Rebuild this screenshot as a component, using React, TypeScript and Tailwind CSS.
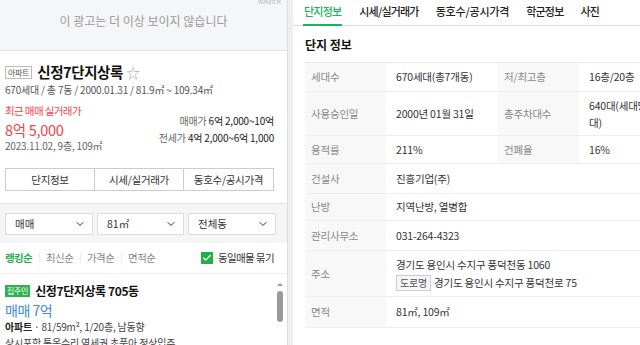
import { ChevronDown, Check } from 'lucide-react';

const font = { fontFamily: '"Noto Sans CJK KR", "Noto Sans", sans-serif' };

const rows: { h: string; cells: [string, React.ReactNode][] }[] = [
  { h: 'h-[29px]', cells: [['세대수', '670세대(총7개동)'], ['저/최고층', '16층/20층']] },
  {
    h: 'h-[44px]',
    cells: [
      ['사용승인일', '2000년 01월 31일'],
      ['총주차대수', <span className="block leading-[17px]">640대(세대당 1.0<br />대)</span>],
    ],
  },
  { h: 'h-[28px]', cells: [['용적률', '211%'], ['건폐율', '16%']] },
  { h: 'h-[30px]', cells: [['건설사', '진흥기업(주)']] },
  { h: 'h-[27px]', cells: [['난방', '지역난방, 열병합']] },
  { h: 'h-[30px]', cells: [['관리사무소', '031-264-4323']] },
  {
    h: 'h-[46px]',
    cells: [
      [
        '주소',
        <div className="leading-[18px]">
          <div>경기도 용인시 수지구 풍덕천동 1060</div>
          <div className="flex items-center gap-[3px]">
            <span className="border border-[#ccc] bg-[#f7f7f7] px-[3px] text-[10px] leading-[14px] text-[#555]">도로명</span>
            경기도 용인시 수지구 풍덕천로 75
          </div>
        </div>,
      ],
    ],
  },
  { h: 'h-[31px]', cells: [['면적', '81㎡, 109㎡']] },
];

function Select({ label, w }: { label: string; w: string }) {
  return (
    <div className={`${w} h-[22px] bg-white border border-[#ddd] flex items-center justify-between pl-[9px] pr-[6px] text-[10.5px] text-[#333]`}>
      <span>{label}</span>
      <ChevronDown size={12} strokeWidth={2} className="text-[#333]" />
    </div>
  );
}

export default function App() {
  return (
    <div className="flex h-[345px] w-[640px] overflow-hidden bg-white text-[#222]" style={font}>
      {/* left panel */}
      <div className="w-[288px] shrink-0 flex flex-col border-r border-[#ddd]">
        <div className="relative h-[51px] shrink-0 bg-[#f5f6f8] border-b border-[#e4e4e4] flex justify-center pt-[12px]">
          <span className="text-[12px] text-[#999]">이 광고는 더 이상 보이지 않습니다</span>
          <span className="absolute right-[6px] -top-[4px] text-[7px] font-bold text-[#c8c8c8]">NAVER</span>
        </div>

        <div className="pl-[5px] pr-[13px] pt-[12px] pb-[12px] border-b border-[#e4e4e4]">
          <div className="flex items-center h-[18px]">
            <span className="border border-[#bbb] text-[8px] leading-[11px] px-[2px] text-[#555] tracking-[-0.3px]">아파트</span>
            <span className="ml-[5px] text-[14.5px] font-bold text-[#111] tracking-[-0.4px]">신정7단지상록</span>
            <span className="ml-[3px] text-[14px] text-[#aaa] leading-none">☆</span>
          </div>
          <div className="mt-[2px] text-[10px] leading-[14px] text-[#555] tracking-[-0.2px]">670세대 / 총 7동 / 2000.01.31 / 81.9㎡ ~ 109.34㎡</div>
          <div className="flex justify-between mt-[7px]">
            <div>
              <div className="text-[10.5px] text-[#f5424b] leading-[14px] tracking-[-0.6px]">최근 매매 실거래가</div>
              <div className="text-[14.5px] text-[#f5424b] leading-[20px] mt-[2px] tracking-[-0.3px]">8억 5,000</div>
              <div className="text-[10px] text-[#666] leading-[12px] tracking-[-0.2px]">2023.11.02, 9층, 109㎡</div>
            </div>
            <div className="text-right text-[10px] pt-[8px] leading-[17px] tracking-[-0.2px]">
              <div><span className="text-[#666]">매매가 </span><span className="text-[#222]">6억 2,000~10억</span></div>
              <div><span className="text-[#666]">전세가 </span><span className="text-[#222]">4억 2,000~6억 1,000</span></div>
            </div>
          </div>
          <div className="mt-[16px] grid grid-cols-3 border border-[#ccc] h-[23px] text-[10.5px] text-[#333] tracking-[-0.3px]">
            <div className="flex items-center justify-center border-r border-[#ccc]">단지정보</div>
            <div className="flex items-center justify-center border-r border-[#ccc]">시세/실거래가</div>
            <div className="flex items-center justify-center">동호수/공시가격</div>
          </div>
        </div>

        <div className="h-[39px] shrink-0 bg-[#f5f5f5] flex items-center gap-[4px] px-[5px]">
          <Select label="매매" w="w-[88px]" />
          <Select label="81㎡" w="w-[87px]" />
          <Select label="전체동" w="w-[88px]" />
        </div>

        <div className="h-[31px] shrink-0 flex items-center justify-between pl-[5px] pr-[13px] border-b border-[#eee] text-[10.5px] tracking-[-0.6px]">
          <div className="flex items-center gap-[6px] text-[#888]">
            <span className="text-[#22b04b] font-bold">랭킹순</span>
            <span className="text-[#e2e2e2] text-[9px]">|</span>
            <span>최신순</span>
            <span className="text-[#e2e2e2] text-[9px]">|</span>
            <span>가격순</span>
            <span className="text-[#e2e2e2] text-[9px]">|</span>
            <span>면적순</span>
          </div>
          <div className="flex items-center gap-[5px] text-[#333]">
            <span className="w-[12px] h-[12px] bg-[#22b04b] flex items-center justify-center">
              <Check size={10} strokeWidth={3} className="text-white" />
            </span>
            동일매물 묶기
          </div>
        </div>

        <div className="flex-1 flex min-h-0">
          <div className="flex-1 pl-[5px] pt-[8px] whitespace-nowrap overflow-hidden">
            <div className="flex items-center h-[18px]">
              <span className="bg-[#2fb14d] text-white text-[8px] leading-[12px] px-[2px] tracking-[-0.3px]">집주인</span>
              <span className="ml-[5px] text-[12px] font-bold text-[#111] tracking-[-0.4px]">신정7단지상록 705동</span>
            </div>
            <div className="text-[14px] text-[#4488e0] leading-[18px] mt-[1px] tracking-[-0.5px]">매매 7억</div>
            <div className="text-[10px] text-[#444] leading-[16px] tracking-[-0.2px]"><span className="font-bold text-[#222]">아파트</span> · 81/59m², 1/20층, 남동향</div>
            <div className="text-[10px] text-[#444] leading-[16px] tracking-[-0.2px]">상시포함 통옥수리 역세권 초품아 정상입주</div>
          </div>
          <div className="w-[10px] shrink-0 flex flex-col items-center pt-[9px] mr-[2px]">
            <span className="w-0 h-0 border-l-[3px] border-r-[3px] border-b-[3px] border-l-transparent border-r-transparent border-b-[#999]" />
            <span className="mt-[5px] w-[6px] h-[31px] rounded-[3px] bg-[#999]" />
          </div>
        </div>
      </div>

      <div className="w-[5px] shrink-0 bg-[#efefef]" />

      {/* right panel */}
      <div className="flex-1 flex flex-col border-r-[4px] border-[#eee] bg-white">
        <div className="h-[26px] shrink-0 flex items-end gap-[17px] px-[10px] border-b border-[#ddd] text-[11px] font-medium text-[#222] tracking-[-0.8px]">
          <span className="text-[#19b35a] border-b-2 border-[#19b35a] pb-[5px] px-[1px] -mb-px">단지정보</span>
          <span className="pb-[6px]">시세/실거래가</span>
          <span className="pb-[6px] tracking-[-0.2px]">동호수/공시가격</span>
          <span className="pb-[6px]">학군정보</span>
          <span className="pb-[6px]">사진</span>
        </div>
        <div className="pl-[12px] pt-[10px]">
          <div className="text-[12px] font-bold text-[#111] leading-[18px]">단지 정보</div>
          <div className="mt-[8px] border-t border-[#e8e8e8] text-[10.5px] tracking-[-0.2px]">
            {rows.map((r, i) => (
              <div key={i} className={`${r.h} flex border-b border-[#eee]`}>
                {r.cells.map(([k, v], j) => (
                  <div key={j} className={`flex ${r.cells.length === 1 ? 'flex-1' : j === 0 ? 'w-[193px]' : 'flex-1'}`}>
                    <div className="w-[81px] shrink-0 bg-[#f8f8f8] text-[#888] flex items-center pl-[6px]">{k}</div>
                    <div className="flex-1 flex items-center pl-[10px] text-[#333] whitespace-nowrap overflow-hidden">{v}</div>
                  </div>
                ))}
              </div>
            ))}
          </div>
        </div>
      </div>
    </div>
  );
}
